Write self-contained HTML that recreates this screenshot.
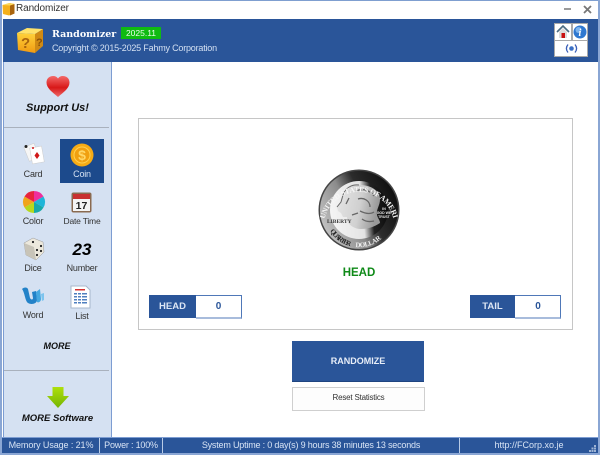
<!DOCTYPE html>
<html><head><meta charset="utf-8">
<style>
html,body{margin:0;padding:0;background:#fff;}
#w{position:relative;width:600px;height:455px;overflow:hidden;background:#fff;font-family:"Liberation Sans",sans-serif;color:#222;}
#w div,#w svg{position:absolute;}
.t{white-space:nowrap;text-align:center;font-size:9px;line-height:12px;}
.l{letter-spacing:-.2px;color:#333}
.bi{font-weight:bold;font-style:italic;color:#111;}
.sb{top:438px;height:15px;line-height:15px;color:#d8e4f5;font-size:9px;text-align:center;white-space:nowrap;}
</style></head><body>
<div id="w">
<!-- window frame -->
<div style="left:0;top:0;width:600px;height:1px;background:#7f9fd0"></div>
<div style="left:0;top:0;width:2px;height:455px;background:#8aa6d4"></div>
<div style="left:598px;top:0;width:2px;height:455px;background:#8aa6d4"></div>
<div style="left:0;top:453px;width:600px;height:2px;background:#8aa6d4"></div>
<!-- title -->
<svg style="left:2px;top:2px" width="13" height="14" viewBox="0 0 13 14"><path d="M0.500 3 8 1 12.500 2V11.500L7 13.500 1 12Z" fill="#f4b01c"/><path d="M8 3.500 12.500 2V11.500L8 13.500Z" fill="#a9640e"/><path d="M0.500 3 7 1 12.500 2 8 3.500Z" fill="#fbd75a"/></svg>
<div class="t" style="left:16px;top:3px;font-size:10px;letter-spacing:-.1px;color:#333">Randomizer</div>
<div style="left:564px;top:8px;width:7px;height:2px;background:#9a9a9a"></div>
<svg style="left:583px;top:5px" width="9" height="9" viewBox="0 0 9 9"><path d="M1 1 8 8M8 1 1 8" stroke="#777" stroke-width="1.800"/></svg>
<!-- header -->
<div style="left:3px;top:19px;width:595px;height:43px;background:#2a5599"></div>
<svg style="left:15px;top:26px" width="30" height="29" viewBox="0 0 30 29">
<defs><linearGradient id="g" x1="0" y1="0" x2="0" y2="1"><stop offset="0" stop-color="#ffd23a"/><stop offset="1" stop-color="#f09a12"/></linearGradient></defs>
<path d="M2 7 20 8 20 27 3 24Z" fill="url(#g)"/>
<path d="M20 8 28 3 28 20 20 27Z" fill="#d08a14"/>
<path d="M2 7 12 2 28 3 20 8Z" fill="#ffe36a"/>
<text x="6" y="22" font-family="Liberation Sans" font-weight="bold" font-size="15" fill="#a9640e">?</text>
<text x="21" y="20" font-family="Liberation Sans" font-weight="bold" font-size="11" fill="#8a5208">?</text>
</svg>
<div class="t" style="left:52px;top:29px;font-size:9.500px;font-weight:bold;color:#fff;font-family:'DejaVu Serif','Liberation Serif',serif;">Randomizer</div>
<div style="left:121px;top:27px;width:40px;height:12px;background:#0fbb12"></div>
<div class="t" style="left:121px;top:27px;width:40px;font-size:8.500px;color:#eaffea;line-height:12px">2025.11</div>
<div class="t" style="left:52px;top:42px;font-size:9px;letter-spacing:-.2px;color:#d3e0f2">Copyright © 2015-2025 Fahmy Corporation</div>
<!-- header buttons -->
<div style="left:554px;top:23px;width:34px;height:34px;background:#a9a9a9"></div>
<div style="left:555px;top:24px;width:16px;height:16px;background:#fff"></div>
<div style="left:573px;top:24px;width:14px;height:16px;background:#fff"></div>
<div style="left:555px;top:41px;width:32px;height:15px;background:#fff"></div>
<svg style="left:556px;top:25px" width="14" height="14" viewBox="0 0 14 14"><path d="M3 7V13H11V7L7 3Z" fill="#dcdcdc"/><path d="M1 7 7 1 13 7" fill="none" stroke="#4a6a80" stroke-width="1.600"/><rect x="5.500" y="8" width="3.500" height="5" fill="#c81010"/></svg>
<svg style="left:573px;top:25px" width="14" height="14" viewBox="0 0 14 14"><circle cx="7" cy="7" r="6.500" fill="#2f78d0"/><circle cx="5.500" cy="5" r="3" fill="#7fb4ec"/><text x="5.500" y="11" font-family="Liberation Serif" font-style="italic" font-weight="bold" font-size="10" fill="#fff">i</text></svg>
<svg style="left:565px;top:43px" width="13" height="11" viewBox="0 0 13 11"><circle cx="6.500" cy="5.500" r="2.300" fill="#3a6fc4"/><path d="M3 1.500C1 4 1 7 3 9.500M10 1.500C12 4 12 7 10 9.500" fill="none" stroke="#3a5fb8" stroke-width="1.300"/></svg>
<!-- sidebar -->
<div style="left:3px;top:62px;width:108px;height:375px;background:#d5e1f2"></div>
<div style="left:111px;top:62px;width:1px;height:375px;background:#7d9dd2"></div>
<div style="left:3px;top:62px;width:1px;height:375px;background:#7d9dd2"></div>
<div style="left:4px;top:127px;width:105px;height:1px;background:#a9b1bd"></div>
<div style="left:4px;top:370px;width:105px;height:1px;background:#a9b1bd"></div>
<svg style="left:46px;top:75px" width="24" height="23" viewBox="0 0 24 23"><defs><linearGradient id="h" x1="0" y1="0" x2="0" y2="1"><stop offset="0" stop-color="#f46a6a"/><stop offset=".55" stop-color="#d81818"/><stop offset="1" stop-color="#ee6a6a"/></linearGradient></defs><path d="M12 22C6 17 .5 13 .5 7.500 .5 3.500 3.500 1 7 1 9.500 1 11 2 12 3.500 13 2 14.500 1 17 1 20.500 1 23.500 3.500 23.500 7.500 23.500 13 18 17 12 22Z" fill="url(#h)"/></svg>
<div class="t bi" style="left:4px;top:101px;width:107px;font-size:11px;line-height:14px">Support Us!</div>
<!-- coin selection -->
<div style="left:60px;top:139px;width:44px;height:44px;background:#1c4a8c"></div>
<!-- card -->
<svg style="left:22px;top:143px" width="24" height="24" viewBox="0 0 24 24"><rect x="4" y="2" width="11" height="15" transform="rotate(-22 9 9)" fill="#f6f6f6" stroke="#ccc" stroke-width=".5"/><circle cx="4" cy="3.500" r="1.500" fill="#222"/><rect x="9" y="4" width="12" height="16" transform="rotate(-10 15 12)" fill="#fff" stroke="#ccc" stroke-width=".5"/><path d="M15 9 17.500 12.500 15 16 12.500 12.500Z" fill="#d01818"/><circle cx="11" cy="5" r="1" fill="#d01818"/></svg>
<div class="t l" style="left:13px;top:168px;width:40px">Card</div>
<!-- coin -->
<svg style="left:70px;top:143px" width="24" height="24" viewBox="0 0 24 24"><circle cx="12" cy="12" r="11.500" fill="#f6ab14"/><circle cx="12" cy="12" r="8" fill="#f0a010" stroke="#ffd050" stroke-width="1"/><text x="12" y="17" text-anchor="middle" font-family="Liberation Sans" font-size="14" font-weight="bold" fill="#ffd868">$</text></svg>
<div class="t l" style="left:62px;top:168px;width:40px;color:#d5e1f2">Coin</div>
<!-- color -->
<svg style="left:22px;top:190px" width="24" height="24" viewBox="0 0 24 24">
<path d="M12 12 12 1A11 11 0 0 1 21.500 6.500Z" fill="#ef2f9c"/>
<path d="M12 12 21.500 6.500A11 11 0 0 1 21.500 17.500Z" fill="#1fb5d8"/>
<path d="M12 12 21.500 17.500A11 11 0 0 1 12 23Z" fill="#16a9a8"/>
<path d="M12 12 12 23A11 11 0 0 1 2.500 17.500Z" fill="#b6d81c"/>
<path d="M12 12 2.500 17.500A11 11 0 0 1 2.500 6.500Z" fill="#f0a41a"/>
<path d="M12 12 2.500 6.500A11 11 0 0 1 12 1Z" fill="#e8243c"/></svg>
<div class="t l" style="left:13px;top:215px;width:40px">Color</div>
<!-- date -->
<svg style="left:71px;top:192px" width="21" height="21" viewBox="0 0 21 21"><rect x=".5" y=".5" width="20" height="20" rx="2" fill="#8a6a50"/><rect x="2" y="2" width="17" height="17" fill="#f4f4f4"/><rect x="2" y="2" width="17" height="5" fill="#c83030"/><text x="10.500" y="17" text-anchor="middle" font-family="Liberation Sans" font-weight="bold" font-size="10.500" fill="#222">17</text></svg>
<div class="t l" style="left:57px;top:215px;width:50px;font-size:8.500px">Date Time</div>
<!-- dice -->
<svg style="left:22px;top:237px" width="23" height="24" viewBox="0 0 23 24"><path d="M2 6 11 1 21 5 22 15 14 23 4 18Z" fill="#ece8dc" stroke="#999" stroke-width=".5"/><path d="M2 6 12 10 14 23 4 18Z" fill="#c8c4b8"/><g fill="#222"><circle cx="11" cy="5" r="1.100"/><circle cx="15" cy="13" r="1.100"/><circle cx="19" cy="9" r="1.100"/><circle cx="15" cy="18" r="1.100"/><circle cx="19" cy="14" r="1.100"/></g></svg>
<div class="t l" style="left:13px;top:262px;width:40px">Dice</div>
<div class="t bi" style="left:62px;top:240px;width:40px;font-size:17px;line-height:20px;color:#000">23</div>
<div class="t l" style="left:57px;top:262px;width:50px">Number</div>
<!-- word -->
<svg style="left:21px;top:286px" width="24" height="20" viewBox="0 0 24 20"><path d="M1 3C3 1 6 1 7 3L9 12C10 14 12 14 12 12L11 6 15 5 16 14C16 18 10 19 7 17 4 15 4 7 1 3Z" fill="#2382c8"/><path d="M15 6 19 3 20 13C20 16 17 17 16 16Z" fill="#46a8e0"/><path d="M20 8 23 7 23 14 21 15Z" fill="#7cc4ee"/></svg>
<div class="t l" style="left:13px;top:309px;width:40px">Word</div>
<!-- list -->
<svg style="left:70px;top:285px" width="21" height="24" viewBox="0 0 21 24"><path d="M1 1H16L20 5V23H1Z" fill="#fff" stroke="#a8b8cc"/><rect x="5" y="4" width="10" height="1.500" fill="#d43030"/><g fill="#4f7fbf"><rect x="4" y="8" width="13" height="1.500"/><rect x="4" y="11" width="13" height="1.500"/><rect x="4" y="14" width="13" height="1.500"/><rect x="4" y="17" width="13" height="1.500"/></g><g fill="#fff"><rect x="7" y="8" width="1" height="11"/><rect x="11" y="8" width="1" height="11"/></g></svg>
<div class="t l" style="left:62px;top:310px;width:40px">List</div>
<div class="t bi" style="left:37px;top:340px;width:40px;font-size:9px">MORE</div>
<!-- arrow -->
<svg style="left:47px;top:387px" width="22" height="22" viewBox="0 0 22 22"><defs><linearGradient id="a" x1="0" y1="0" x2="0" y2="1"><stop offset="0" stop-color="#aee00c"/><stop offset="1" stop-color="#74b404"/></linearGradient></defs><path d="M5.500 0H16.500V9H22L11 21 0 9H5.500Z" fill="url(#a)"/></svg>
<div class="t bi" style="left:4px;top:413px;width:107px;font-size:9.500px">MORE Software</div>
<!-- main panel -->
<div style="left:138px;top:118px;width:433px;height:210px;border:1px solid #c6c6c6;background:#fff"></div>
<!-- quarter -->
<svg style="left:318px;top:169px" width="82" height="82" viewBox="0 0 82 82">
<defs>
<linearGradient id="q" x1="0" y1=".75" x2="1" y2=".25"><stop offset="0" stop-color="#c8c8c8"/><stop offset=".4" stop-color="#8c8c8c"/><stop offset=".6" stop-color="#2c2c2c"/><stop offset="1" stop-color="#0c0c0c"/></linearGradient>
<linearGradient id="in" x1="0" y1=".5" x2="1" y2=".4"><stop offset="0" stop-color="#f4f4f4"/><stop offset=".55" stop-color="#e4e4e4"/><stop offset=".72" stop-color="#222"/><stop offset="1" stop-color="#0a0a0a"/></linearGradient>
<linearGradient id="f" x1="0" y1="0" x2="1" y2=".2"><stop offset="0" stop-color="#e6e6e6"/><stop offset=".6" stop-color="#d0d0d0"/><stop offset="1" stop-color="#9a9a9a"/></linearGradient>
<path id="top" d="M6.500 50A35.500 35.500 0 0 1 75.500 50"/>
<path id="bot" d="M12 62A34 34 0 0 0 70 62"/>
</defs>
<circle cx="41" cy="41" r="40.500" fill="#444"/>
<circle cx="41" cy="41" r="39" fill="url(#q)"/>
<circle cx="41" cy="41" r="29" fill="url(#in)"/>
<path d="M19 38 23 33 25 26C27 19 34 15 41 16 52 16 62 21 62 30 62 37 58 40 59 46 60 50 62 51 62 54 56 58 50 60 43 60 37 60 32 57 29 52L29 48 25 48 23 44 20 42Z" fill="url(#f)"/>
<path d="M19 38 23 33 25 26C27 19 34 15 41 16" fill="none" stroke="#666" stroke-width="1"/>
<path d="M38 22C44 19 52 21 56 27M40 30C46 28 52 32 52 38M42 42C48 45 53 45 56 43M44 50C48 53 52 53 56 52M31 29 28 35M34 46 40 44" fill="none" stroke="#666" stroke-width="1.300"/>
<g font-family="Liberation Serif" font-weight="bold">
<text font-size="7.500" fill="#f6f6f6"><textPath href="#top" textLength="104" lengthAdjust="spacing">UNITED STATES OF AMERICA</textPath></text>
<text font-size="7" fill="#222"><textPath href="#bot" textLength="26" lengthAdjust="spacing">QUARTER</textPath></text>
<text font-size="7" fill="#f0f0f0"><textPath href="#bot" startOffset="31" textLength="28" lengthAdjust="spacing">DOLLAR</textPath></text>
</g>
<text x="9" y="54" font-family="Liberation Serif" font-weight="bold" font-size="5.500" fill="#333">LIBERTY</text>
<text x="66" y="41" text-anchor="middle" font-family="Liberation Sans" font-weight="bold" font-size="3.500" fill="#eee">IN</text>
<text x="66" y="45" text-anchor="middle" font-family="Liberation Sans" font-weight="bold" font-size="3.500" fill="#eee">GOD WE</text>
<text x="66" y="49" text-anchor="middle" font-family="Liberation Sans" font-weight="bold" font-size="3.500" fill="#eee">TRUST</text>
</svg>
<div class="t" style="left:318px;top:267px;width:82px;font-size:11.500px;font-weight:bold;color:#0f8a18">HEAD</div>
<!-- head counter -->
<div style="left:149px;top:295px;width:47px;height:23px;background:#2a5599"></div>
<div class="t" style="left:149px;top:301px;width:47px;color:#dde6f4;font-weight:bold;font-size:9.500px">HEAD</div>
<div style="left:196px;top:295px;width:45px;height:21px;border:1px solid #4f78b8;border-left:0;border-bottom:2px solid #a8bcdc;background:#fff"></div>
<div class="t" style="left:196px;top:301px;width:45px;color:#2a5599;font-weight:bold;font-size:10px">0</div>
<!-- tail counter -->
<div style="left:470px;top:295px;width:45px;height:23px;background:#2a5599"></div>
<div class="t" style="left:470px;top:301px;width:45px;color:#dde6f4;font-weight:bold;font-size:9.500px">TAIL</div>
<div style="left:515px;top:295px;width:45px;height:21px;border:1px solid #4f78b8;border-left:0;border-bottom:2px solid #a8bcdc;background:#fff"></div>
<div class="t" style="left:515px;top:301px;width:46px;color:#2a5599;font-weight:bold;font-size:10px">0</div>
<!-- buttons -->
<div style="left:292px;top:341px;width:132px;height:40px;background:#2a5599;border-bottom:1px solid #1f4580"></div>
<div class="t" style="left:292px;top:355px;width:132px;color:#e8eef8;font-weight:bold;font-size:9px">RANDOMIZE</div>
<div style="left:292px;top:387px;width:131px;height:22px;border:1px solid #cfcfcf;background:#fdfdfd"></div>
<div class="t" style="left:292px;top:392px;width:133px;font-size:8px;letter-spacing:-.2px;color:#333">Reset Statistics</div>
<!-- status bar -->
<div style="left:2px;top:437px;width:596px;height:1px;background:#7d9dd2"></div>
<div style="left:2px;top:438px;width:596px;height:15px;background:#2a5599"></div>
<div class="sb" style="left:3px;width:96px;letter-spacing:-.1px">Memory Usage : 21%</div>
<div style="left:99px;top:438px;width:1px;height:15px;background:#b9cbe6"></div>
<div class="sb" style="left:100px;width:62px;letter-spacing:-.2px">Power : 100%</div>
<div style="left:162px;top:438px;width:1px;height:15px;background:#b9cbe6"></div>
<div class="sb" style="left:163px;width:296px;letter-spacing:-.19px">System Uptime : 0 day(s) 9 hours 38 minutes 13 seconds</div>
<div style="left:459px;top:438px;width:1px;height:15px;background:#b9cbe6"></div>
<div class="sb" style="left:460px;width:138px">http://FCorp.xo.je</div>
<svg style="left:589px;top:444px" width="8" height="8" viewBox="0 0 8 8"><g fill="#9fb4d4"><rect x="5" y="1" width="2" height="2"/><rect x="2.500" y="3.500" width="2" height="2"/><rect x="5" y="3.500" width="2" height="2"/><rect x="0" y="6" width="2" height="2"/><rect x="2.500" y="6" width="2" height="2"/><rect x="5" y="6" width="2" height="2"/></g></svg>
</div>
</body></html>
